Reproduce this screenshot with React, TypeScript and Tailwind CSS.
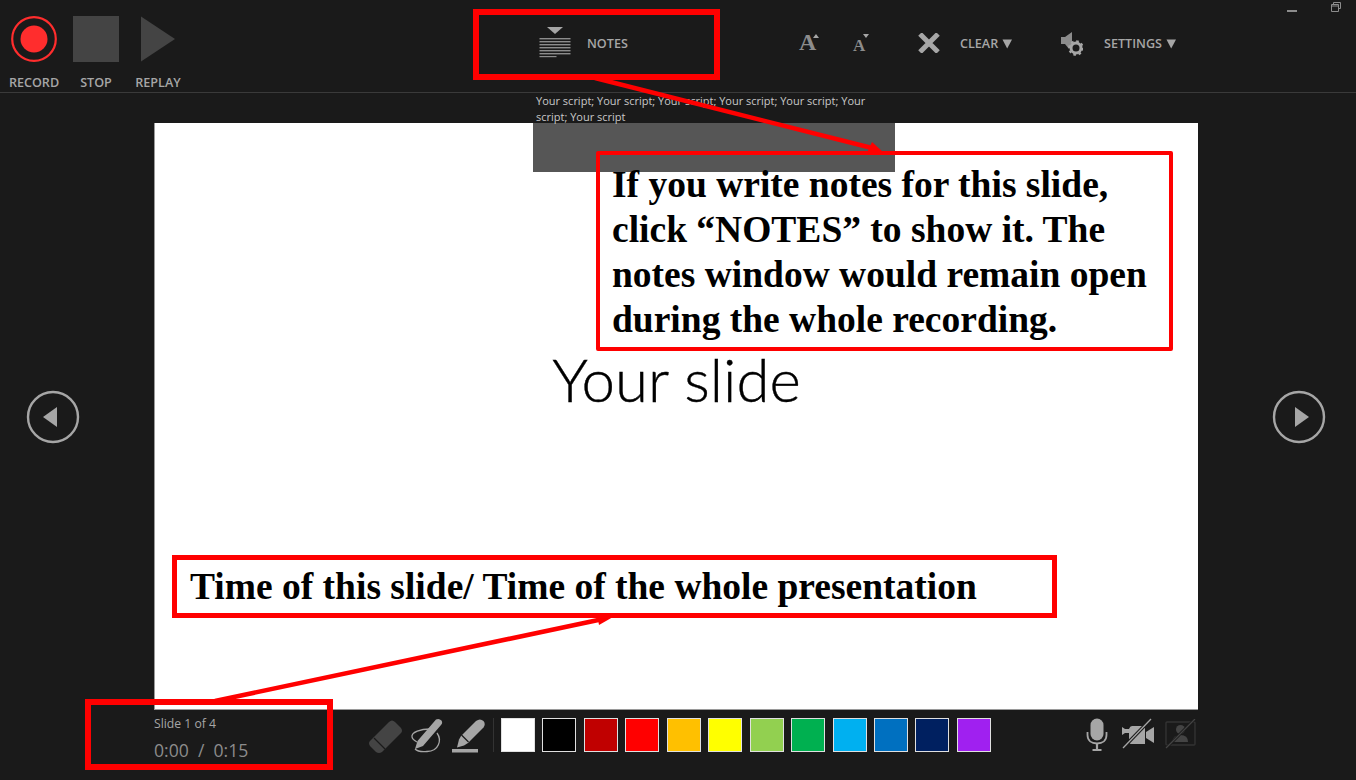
import React from "react";

const SWATCHES = ["bg-[#ffffff]","bg-[#000000]","bg-[#c00000]","bg-[#ff0000]","bg-[#ffc000]","bg-[#ffff00]","bg-[#92d050]","bg-[#00b050]","bg-[#00b0f0]","bg-[#0070c0]","bg-[#002060]","bg-[#a020f0]"];

function Labeled({ icon, label, cls }: { icon: React.ReactNode; label: string; cls: string }) {
  return (
    <div className={"flex flex-col items-center " + cls}>
      <div className="h-[46px] flex items-center justify-center">{icon}</div>
      <span className="mt-[13px] text-[12.6px] leading-[16px] font-semibold text-[#a6a6a6] whitespace-nowrap">{label}</span>
    </div>
  );
}

function AIcon({ size, up, cls }: { size: number; up: boolean; cls: string }) {
  return (
    <div className={"relative flex items-end " + cls}>
      <span className="font-['Liberation_Serif',serif] font-bold text-[#8c8c8c] leading-none" style={{ fontSize: size }}>A</span>
      <svg width="6" height="4" viewBox="0 0 6 4" className="absolute right-0 top-0">
        <path d={up ? "M0 4L3 0L6 4Z" : "M0 0L3 4L6 0Z"} fill="#a6a6a6" />
      </svg>
    </div>
  );
}

function Triangle() {
  return (
    <svg width="11" height="10" viewBox="0 0 11 10" className="ml-[4px]">
      <path d="M0.5 0.5H10L5.2 9.5Z" fill="#a6a6a6" />
    </svg>
  );
}

function NavCircle({ dir }: { dir: "l" | "r" }) {
  return (
    <svg width="54" height="54" viewBox="0 0 54 54">
      <circle cx="27" cy="27" r="25" fill="none" stroke="#a6a6a6" strokeWidth="2.4" />
      <path d={dir === "l" ? "M17 27L31 17V37Z" : "M37 27L23 17V37Z"} fill="#a6a6a6" />
    </svg>
  );
}

export default function App() {
  return (
    <div className="relative w-[1356px] h-[780px] overflow-hidden bg-[#1a1a1a] font-['Open_Sans',sans-serif]">
      {/* Top ribbon */}
      <header className="relative flex h-[93px] border-b border-[#3a3a3a]">
        <div className="flex pt-[16px] pl-[8px]">
          <Labeled
            cls="w-[52px]"
            label="RECORD"
            icon={
              <svg width="46" height="46" viewBox="0 0 46 46">
                <circle cx="23" cy="23" r="21.8" fill="none" stroke="#ff2d2d" strokeWidth="2.2" />
                <circle cx="23" cy="23" r="13.5" fill="#ff2d2d" />
              </svg>
            }
          />
          <Labeled cls="w-[46px] ml-[13px]" label="STOP" icon={<div className="w-[46px] h-[46px] bg-[#444444]" />} />
          <Labeled
            cls="w-[48px] ml-[15px]"
            label="REPLAY"
            icon={
              <svg width="36" height="46" viewBox="0 0 36 46">
                <path d="M1 0.5L35 23L1 45.5Z" fill="#444444" />
              </svg>
            }
          />
        </div>

        <div className="ml-[357px] w-[120px] pt-[26px] flex items-start">
          <svg width="32" height="32" viewBox="0 0 32 32">
            <path d="M8 1H24L16 8Z" fill="#a6a6a6" />
            <g fill="#8c8c8c">
              <rect x="0.5" y="12" width="31" height="1.4" />
              <rect x="0.5" y="15" width="31" height="1.4" />
              <rect x="0.5" y="18" width="31" height="1.4" />
              <rect x="0.5" y="21" width="31" height="1.4" />
              <rect x="0.5" y="24" width="31" height="1.4" />
              <rect x="0.5" y="27" width="31" height="1.4" />
              <rect x="0.5" y="30" width="17" height="1.2" />
            </g>
          </svg>
          <span className="ml-[16px] mt-[9px] text-[12.6px] leading-[18px] font-semibold text-[#a6a6a6]">NOTES</span>
        </div>

        <div className="ml-[140px] pt-[34px] flex items-start">
          <AIcon size={24} up cls="w-[20px] h-[20px]" />
          <AIcon size={17} up={false} cls="ml-[34px] w-[16px] h-[20px]" />
        </div>

        <div className="ml-[49px] pt-[33px] flex items-start">
          <svg width="22" height="20" viewBox="0 0 22 20">
            <path d="M2 1L20 19M20 1L2 19" fill="none" stroke="#a6a6a6" strokeWidth="5" />
          </svg>
          <div className="ml-[20px] w-[54px] flex items-center h-[22px] whitespace-nowrap">
            <span className="text-[12.6px] leading-[18px] font-semibold text-[#a6a6a6]">CLEAR</span>
            <Triangle />
          </div>
        </div>

        <div className="ml-[47px] pt-[32px] flex items-start">
          <svg width="22" height="24" viewBox="0 0 22 24">
            <path d="M0 5H4L11 0V12L8 17L4 12H0Z" fill="#8c8c8c" />
            <circle cx="15" cy="16" r="5" fill="none" stroke="#a6a6a6" strokeWidth="3" />
            <circle cx="15" cy="16" r="6.8" fill="none" stroke="#a6a6a6" strokeWidth="2" strokeDasharray="2.6 2.74" />
          </svg>
          <div className="ml-[21px] mt-[1px] flex items-center h-[22px] whitespace-nowrap">
            <span className="text-[12.6px] leading-[18px] font-semibold text-[#a6a6a6]">SETTINGS</span>
            <Triangle />
          </div>
        </div>

        <div className="absolute top-[2px] right-[15px] flex items-start gap-[34px]">
          <div className="mt-[8px] w-[10px] h-[2px] bg-[#8c8c8c]" />
          <svg width="10" height="10" viewBox="0 0 10 10">
            <path d="M2.5 2.5V0.5H9.5V6.5H7.5M0.5 2.5H7.5V9.5H0.5ZM0.5 4H7.5" fill="none" stroke="#8c8c8c" strokeWidth="1" />
          </svg>
        </div>
      </header>

      {/* Stage */}
      <main className="flex h-[617px] pt-[30px]">
        <div className="w-[154px] flex items-center pl-[26px] pt-[1px]"><NavCircle dir="l" /></div>
        <div className="relative w-[1044px] h-[587px] bg-white border-l border-b border-[#9a9a9a] flex items-center justify-center">
          <span className="font-['Lato',sans-serif] font-light text-[60px] leading-none text-black mb-[74px] [-webkit-text-stroke:0.4px_black]">Your slide</span>
        </div>
        <div className="flex-1 flex items-center pl-[74px] pt-[1px]"><NavCircle dir="r" /></div>
      </main>

      {/* Notes window */}
      <div className="absolute left-[533px] top-[123px] w-[362px] h-[49px] bg-[#565656]" />
      <p className="absolute left-[536px] top-[93px] w-[345px] text-[11px] leading-[16px] text-[#c8c8c8]">
        Your script; Your script; Your script; Your script; Your script; Your script; Your script
      </p>

      {/* Bottom toolbar */}
      <footer className="flex h-[70px] pt-[7px]">
        <div className="w-[154px]" />
        <div className="w-[214px]">
          <div className="text-[12.2px] leading-[14px] text-[#a6a6a6]">Slide 1 of 4</div>
          <div className="mt-[8px] text-[17.6px] leading-[22px] text-[#8c8c8c] whitespace-pre">0:00  /  0:15</div>
        </div>
        <div className="flex items-start gap-[5px] pt-[1px] h-[36px]">
          <svg width="36" height="36" viewBox="0 0 36 36">
            <path d="M2 23L21 4Q24 1 27 4L33 10Q35 13 33 15L14 34Q11 36 8 34L2 28Q0 25 2 23Z" fill="#444444" />
            <path d="M6 20L17 31" stroke="#1a1a1a" strokeWidth="1.2" />
          </svg>
          <svg width="36" height="36" viewBox="0 0 36 36">
            <path d="M27 1.5Q30 0 32.5 2.5Q34 5 32 7L14 28L6 31L8.5 23Z" fill="#a6a6a6" />
            <path d="M21 11C12 11 2 14 3 19C3.5 22 6 23 8 24M28 15C33 22 30 33 18 33.5C13 34 8 33 6 31" fill="none" stroke="#a6a6a6" strokeWidth="1.3" />
          </svg>
          <svg width="36" height="36" viewBox="0 0 36 36">
            <path d="M26 3Q30 0 33.5 3Q36 6 33.5 9.5L18 25L14 27.5L7 29.5L9 21.5L11 18Z" fill="#a6a6a6" />
            <path d="M11.5 17L18.5 24" stroke="#1a1a1a" strokeWidth="1.2" />
            <rect x="2" y="31" width="26" height="3.5" fill="#a6a6a6" />
          </svg>
          <div className="w-px h-[34px] bg-[#333333] ml-[2px] mr-[2px]" />
          <div className="flex gap-[7.45px]">
            {SWATCHES.map((c) => (
              <div key={c} className={"w-[34px] h-[34px] border-[1.5px] border-[#e0e0e0] " + c} />
            ))}
          </div>
        </div>
        <div className="ml-[95px] flex items-start pt-[1px]">
          <svg width="22" height="34" viewBox="0 0 22 34">
            <rect x="4.5" y="0.5" width="13" height="22" rx="6.5" fill="#a6a6a6" />
            <path d="M1.5 14V17C1.5 22.5 5.5 25.5 11 25.5C16.5 25.5 20.5 22.5 20.5 17V14" fill="none" stroke="#a6a6a6" strokeWidth="1.8" />
            <path d="M11 25V31M6.5 32H15.5" stroke="#a6a6a6" strokeWidth="2.2" />
          </svg>
          <svg width="34" height="32" viewBox="0 0 34 32" className="ml-[13px]">
            <path d="M1 9L4 11H8Q9 8 11 8H24V26H10Q8 26 8 22V15H4L1 17Z" fill="#a6a6a6" />
            <path d="M25 14L33 9V25L25 20Z" fill="#a6a6a6" />
            <path d="M2 30L30 1" stroke="#1a1a1a" strokeWidth="3.4" />
            <path d="M2 30L30 1" stroke="#a6a6a6" strokeWidth="1.3" />
          </svg>
          <svg width="32" height="30" viewBox="0 0 32 30" className="ml-[10px] mt-[1px]">
            <rect x="1" y="3" width="29" height="23" rx="1" fill="none" stroke="#333333" strokeWidth="1.4" />
            <circle cx="15.5" cy="10.5" r="4.5" fill="#444444" />
            <path d="M7 23Q8 16 15.5 16Q23 16 23 23Z" fill="#444444" />
            <path d="M1 29L30 0" stroke="#1a1a1a" strokeWidth="3" />
            <path d="M1 29L30 0" stroke="#444444" strokeWidth="1.2" />
          </svg>
        </div>
      </footer>

      {/* Annotations */}
      <div className="absolute left-[473px] top-[9px] w-[247px] h-[71px] border-[6px] border-[#ff0000]" />
      <div className="absolute left-[596px] top-[151px] w-[577px] h-[200px] rounded-[2px] border-[4px] border-[#ff0000] pl-[12px] pt-[7px] font-['Liberation_Serif',serif] font-bold text-black text-[37.5px] leading-[45px] whitespace-pre">
        {"If you write notes for this slide,\nclick “NOTES” to show it. The\nnotes window would remain open\nduring the whole recording."}
      </div>
      <div className="absolute left-[172px] top-[555px] w-[885px] h-[63px] border-[5px] border-[#ff0000] bg-white pl-[13px] pt-[4px] font-['Liberation_Serif',serif] font-bold text-black text-[37.5px] leading-[45px] whitespace-pre">
        Time of this slide/ Time of the whole presentation
      </div>
      <div className="absolute left-[85px] top-[699px] w-[248px] h-[71px] border-[6px] border-[#ff0000]" />
      <svg className="absolute left-0 top-0 pointer-events-none" width="1356" height="780" viewBox="0 0 1356 780">
        <path d="M595 78L872 148" stroke="#ff0000" strokeWidth="4.5" />
        <path d="M883 152L866 155L872 142Z" fill="#ff0000" />
        <path d="M215 701L603 619" stroke="#ff0000" strokeWidth="4.5" />
        <path d="M613 617L599 625L597 614Z" fill="#ff0000" />
      </svg>
    </div>
  );
}
